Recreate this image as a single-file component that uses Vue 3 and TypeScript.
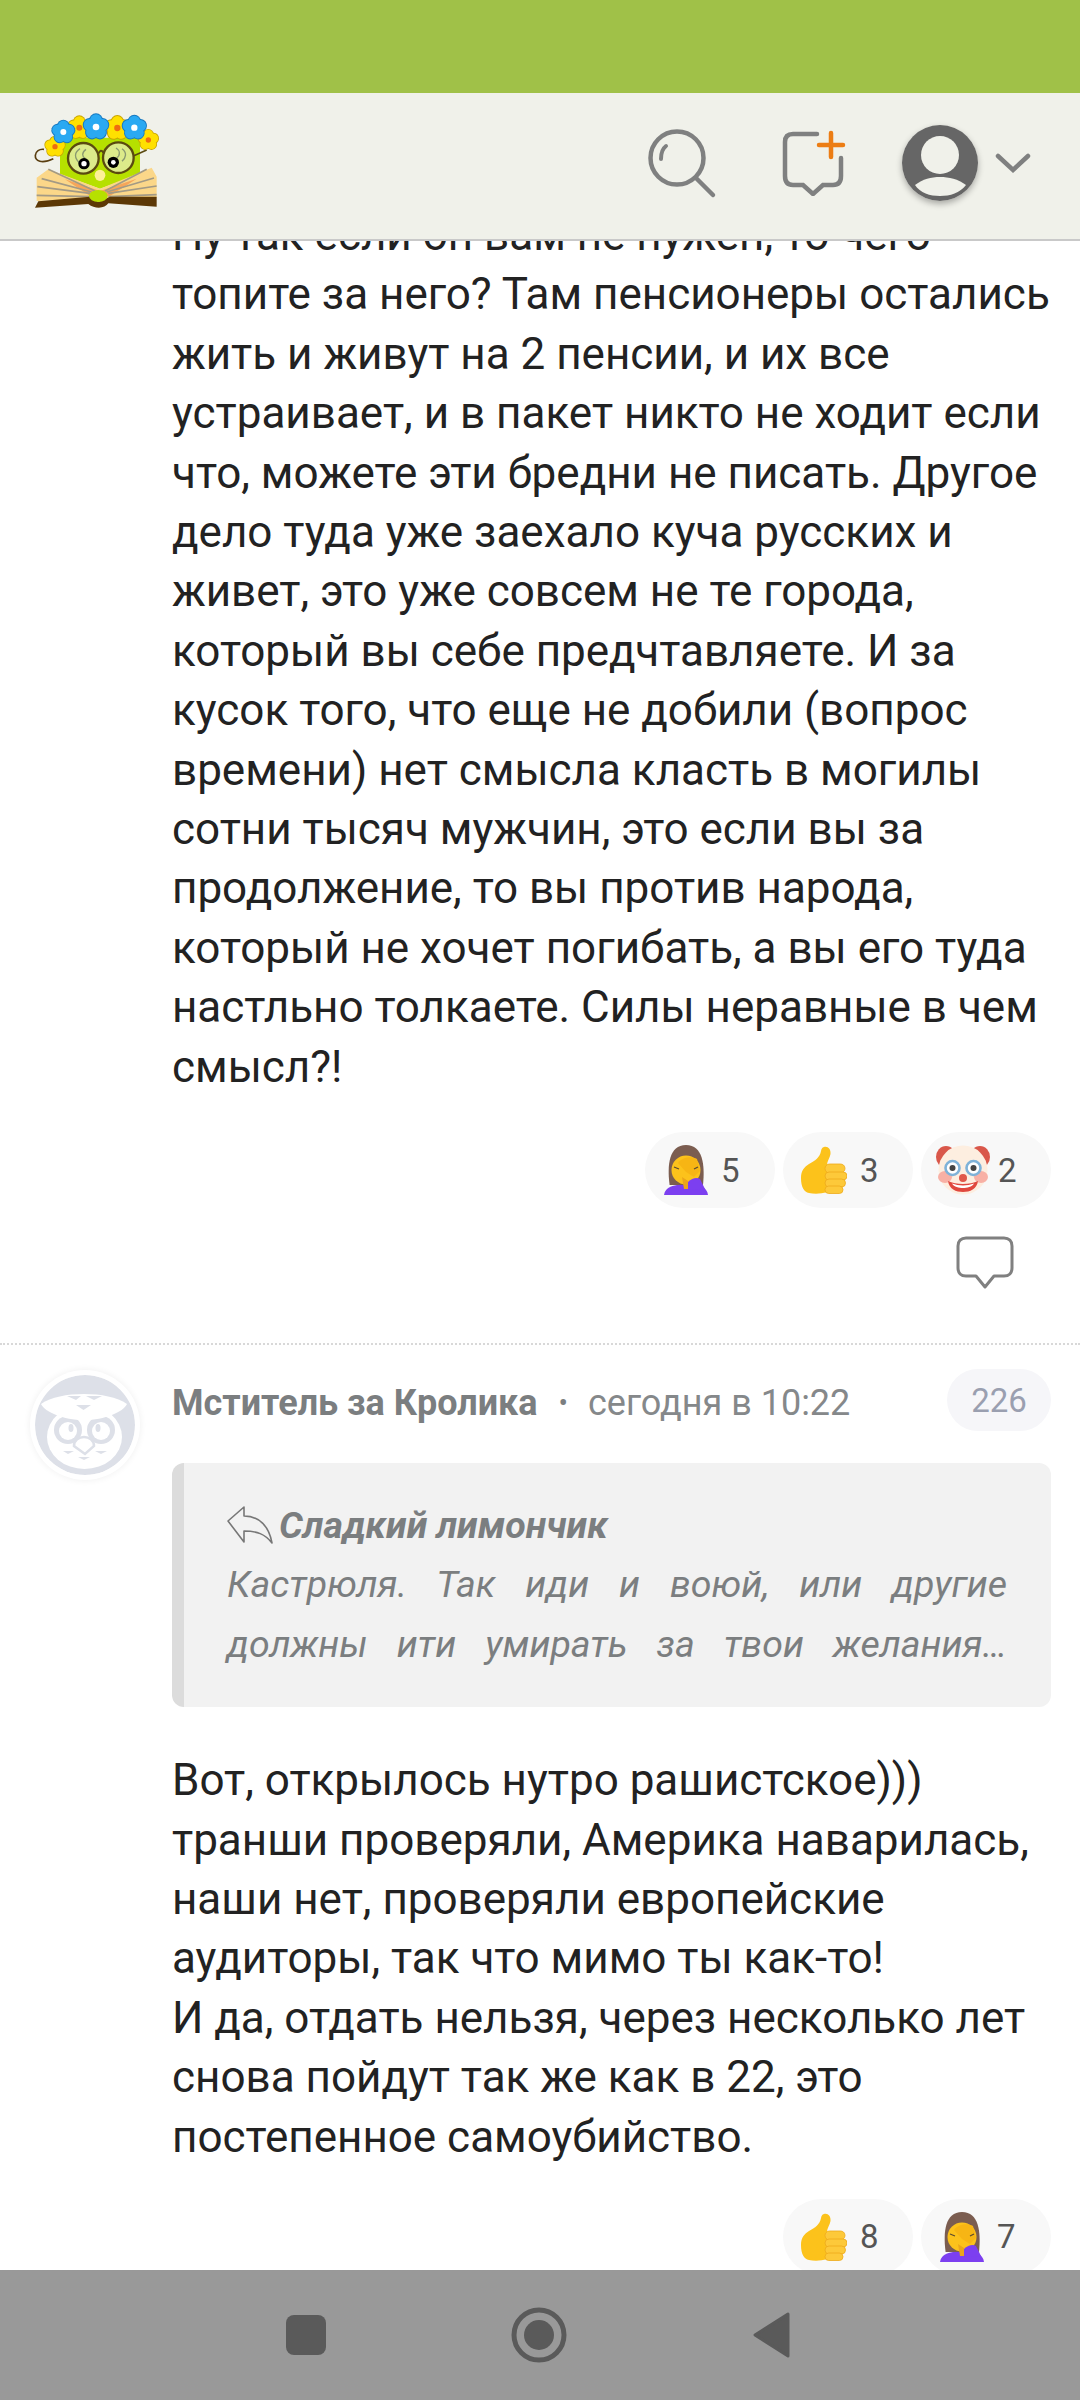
<script setup lang="ts">
interface Reaction { icon: string; count: number }
const firstText = 'Ну так если он вам не нужен, то чего топите за него? Там пенсионеры остались жить и живут на 2 пенсии, и их все устраивает, и в пакет никто не ходит если что, можете эти бредни не писать. Другое дело туда уже заехало куча русских и живет, это уже совсем не те города, который вы себе предчтавляете. И за кусок того, что еще не добили (вопрос времени) нет смысла класть в могилы сотни тысяч мужчин, это если вы за продолжение, то вы против народа, который не хочет погибать, а вы его туда настльно толкаете. Силы неравные в чем смысл?!'
const secondText = [
  'Вот, открылось нутро рашистское))) транши проверяли, Америка наварилась, наши нет, проверяли европейские аудиторы, так что мимо ты как-то!',
  'И да, отдать нельзя, через несколько лет снова пойдут так же как в 22, это постепенное самоубийство.'
]
const firstReactions: Reaction[] = [
  { icon: 'facepalm', count: 5 },
  { icon: 'thumb', count: 3 },
  { icon: 'clown', count: 2 }
]
const secondReactions: Reaction[] = [
  { icon: 'thumb', count: 8 },
  { icon: 'facepalm', count: 7 }
]
const petals = [0, 72, 144, 216, 288]
const flowers = [
  { x: 165, y: 172, s: 0.8, c: '#ffe000', e: '#c9a400', m: '#ef6c10' },
  { x: 445, y: 152, s: 0.8, c: '#ffe000', e: '#c9a400', m: '#ef6c10' },
  { x: 238, y: 115, s: 0.9, c: '#ffe000', e: '#c9a400', m: '#ef6c10' },
  { x: 352, y: 116, s: 0.95, c: '#ffe000', e: '#c9a400', m: '#ef6c10' },
  { x: 190, y: 128, s: 0.9, c: '#2aa9f2', e: '#1678c0', m: '#ffffff' },
  { x: 288, y: 113, s: 1, c: '#2aa9f2', e: '#1678c0', m: '#ffffff' },
  { x: 403, y: 115, s: 0.95, c: '#2aa9f2', e: '#1678c0', m: '#ffffff' }
]
</script>

<template>
  <div class="page">
    <svg class="defs" aria-hidden="true">
      <symbol id="facepalm" viewBox="0 0 44 50">
        <path d="M5.6 40 C3 20 5 0 22 0 C39 0 41 20 39 40 Z" fill="#7b5d50" />
        <path d="M0 50 C1 43 7 41 13 40 L31 40 C38 41 43 43 44 50 Z" fill="#7c3ff0" />
        <ellipse cx="22" cy="25" rx="14.5" ry="14.5" fill="#fcc21b" />
        <path d="M14 18 C18 12 28 11 33 14 L36 26 L30 32 L22 27 Z" fill="#f7b514" />
        <path d="M10 22 L15 24 M34 22 L30 24" stroke="#5b4a30" stroke-width="1.3" fill="none" />
        <path d="M24 37 C28 33 33 32 36 34 L41 44 L24 45 Z" fill="#7c3ff0" />
        <path d="M18 32 L24 36 L24 44 L20 44 Z" fill="#eba51a" />
      </symbol>
      <symbol id="thumb" viewBox="0 0 46 48">
        <path d="M23 1 C27 0 30 3 29.5 8 C29 12 26 15 26 19 L26 46 C20 48 13 48 8 47 C3 46 0 41 0 32 C0 25 3 21 8 18 C14 15 19 11 20 5 C20.5 3 21 1.5 23 1 Z" fill="#fcc21b" />
        <rect x="24" y="18" width="20" height="9" rx="4.5" fill="#fdc93a" stroke="#eda91a" stroke-width="0.8" />
        <rect x="24" y="26" width="22" height="8" rx="4" fill="#fdc93a" stroke="#eda91a" stroke-width="0.8" />
        <rect x="24" y="33" width="20.5" height="8" rx="4" fill="#fdc93a" stroke="#eda91a" stroke-width="0.8" />
        <rect x="24" y="40" width="18" height="7.5" rx="3.7" fill="#fdc93a" stroke="#eda91a" stroke-width="0.8" />
      </symbol>
      <symbol id="clown" viewBox="0 0 54 50">
        <ellipse cx="10" cy="12" rx="10" ry="11" fill="#d9574a" />
        <ellipse cx="44" cy="12" rx="10" ry="11" fill="#d9574a" />
        <circle cx="27" cy="25" r="24.5" fill="#fdeee0" />
        <ellipse cx="9" cy="32" rx="7" ry="6" fill="#f8b0a5" />
        <ellipse cx="45" cy="32" rx="7" ry="6" fill="#f8b0a5" />
        <circle cx="16.5" cy="23" r="7" fill="#fff" stroke="#7fb2d8" stroke-width="2.6" />
        <circle cx="37.5" cy="23" r="7" fill="#fff" stroke="#7fb2d8" stroke-width="2.6" />
        <circle cx="16.5" cy="23" r="3" fill="#444" />
        <circle cx="37.5" cy="23" r="3" fill="#444" />
        <path d="M12 36 C20 40 34 40 42 36 C41 44 34 47 27 47 C20 47 13 44 12 36 Z" fill="#e0483e" />
        <path d="M16 38.5 C23 41 31 41 38 38.5 C36 42 31 43 27 43 C23 43 18 42 16 38.5 Z" fill="#fff" />
        <circle cx="27" cy="33" r="4" fill="#e0584a" />
      </symbol>
    </svg>

    <div class="status-bar"></div>

    <header class="topbar">
      <svg class="logo" viewBox="90 50 420 330">
        <path d="M180 145 H420 V255 L300 298 L180 255 Z" fill="#b6e000" />
        <path d="M110 265 L145 240 L300 298 L455 235 L470 262 L470 325 L330 328 L270 328 L110 335 Z" fill="#fbd789" />
        <path d="M195 270 L300 305 L410 268 L330 320 H270 Z" fill="#f6a65a" />
        <path d="M112 292 L270 312 M110 318 L270 322 M145 240 L285 305 M125 268 L275 308 M470 290 L325 312 M470 316 L325 322 M440 240 L315 305 M462 266 L320 308" stroke="#a39a85" stroke-width="5" fill="none" />
        <path d="M105 355 L115 336 L270 322 L295 338 L330 322 L470 322 V352 L325 342 C315 358 285 360 265 344 Z" fill="#5c3806" />
        <ellipse cx="295" cy="320" rx="28" ry="18" fill="#b6e000" />
        <ellipse cx="300" cy="258" rx="16" ry="17" fill="#fdf09a" />
        <path d="M160 208 C125 225 105 215 106 198 C107 186 118 178 132 180" fill="none" stroke="#5a3e10" stroke-width="5" />
        <path d="M400 200 L440 182" fill="none" stroke="#5a4a10" stroke-width="5" />
        <circle cx="250" cy="207" r="46" fill="#dceb8a" stroke="#5a4a10" stroke-width="7" />
        <circle cx="355" cy="205" r="46" fill="#dceb8a" stroke="#5a4a10" stroke-width="7" />
        <path d="M296 192 Q302 178 310 190" fill="none" stroke="#5a4a10" stroke-width="6" />
        <path d="M240 178 C222 190 222 205 240 222 M258 180 C244 190 246 202 256 208 M348 176 C362 184 360 200 350 205 M366 178 C382 190 378 205 366 216" fill="none" stroke="#8a9a70" stroke-width="4" />
        <circle cx="252" cy="223" r="17" fill="#000" />
        <circle cx="252" cy="223" r="8" fill="#fff" />
        <circle cx="340" cy="219" r="17" fill="#000" />
        <circle cx="340" cy="219" r="7" fill="#fff" />
        <g v-for="(f, i) in flowers" :key="i" :transform="`translate(${f.x} ${f.y}) scale(${f.s})`">
          <circle v-for="a in petals" :key="a" :transform="`rotate(${a}) translate(0 -20)`" r="21" :fill="f.e" />
          <circle v-for="a in petals" :key="`p${a}`" :transform="`rotate(${a}) translate(0 -20)`" r="18" :fill="f.c" />
          <circle r="14" :fill="f.c" />
          <circle r="10" :fill="f.m" />
        </g>
      </svg>

      <div class="actions">
        <svg class="ic-search" viewBox="648 127 70 72">
          <circle cx="677" cy="158" r="26.5" fill="none" stroke="#7f8080" stroke-width="4.5" />
          <path d="M696 178 L713 195" stroke="#7f8080" stroke-width="4.5" stroke-linecap="round" />
          <path d="M661 159 C661 153 662 149 666 146" stroke="#7f8080" stroke-width="4" fill="none" stroke-linecap="round" />
        </svg>
        <svg class="ic-new" viewBox="780 130 66 66">
          <path d="M817 134 H793 C787 134 785 137 785 142 V176 C785 182 788 185 793 185 H803 L813 194 L823 185 H833 C838 185 841 182 841 176 V158" fill="none" stroke="#7f8080" stroke-width="4.5" stroke-linecap="round" />
          <path d="M831 133 V157 M819 145 H843" stroke="#ec7d14" stroke-width="4.5" stroke-linecap="round" />
        </svg>
        <div class="user">
          <svg viewBox="902 124 76 76">
            <circle cx="940" cy="162" r="38" fill="#666" />
            <circle cx="940" cy="154" r="19" fill="#f0f1ea" />
            <path d="M915 184 C923 178 931 176 940 176 C949 176 958 178 966 184 C960 192 950 195 940 195 C930 195 920 192 915 184 Z" fill="#f0f1ea" />
          </svg>
        </div>
        <svg class="ic-chevron" viewBox="995 151 36 22">
          <path d="M998 155 L1013 169 L1028 155" fill="none" stroke="#7f8080" stroke-width="4.5" stroke-linecap="round" />
        </svg>
      </div>
    </header>

    <main class="feed">
      <section class="comment first">
        <p class="body">{{ firstText }}</p>
        <div class="reactions">
          <div v-for="r in firstReactions" :key="r.icon" class="pill">
            <svg :class="['emoji', r.icon]"><use :href="`#${r.icon}`" /></svg>
            <span>{{ r.count }}</span>
          </div>
        </div>
        <div class="reply-row">
          <svg class="ic-comment" viewBox="0 0 58 53">
            <path d="M10 2 H48 C53 2 56 5 56 10 V32 C56 37 53 40 48 40 H38 L29 51 L20 40 H10 C5 40 2 37 2 32 V10 C2 5 5 2 10 2 Z" fill="none" stroke="#808080" stroke-width="3" stroke-linejoin="round" />
          </svg>
        </div>
      </section>

      <section class="comment second">
        <div class="avatar">
          <svg viewBox="0 0 100 100">
            <circle cx="50" cy="50" r="50" fill="#dde0e8" />
            <ellipse cx="49.5" cy="62" rx="37.5" ry="32" fill="#fff" />
            <circle cx="33" cy="55" r="14" fill="#dde0e8" />
            <circle cx="66" cy="55" r="14" fill="#dde0e8" />
            <circle cx="33" cy="56" r="9" fill="#fff" />
            <circle cx="66" cy="56" r="9" fill="#fff" />
            <ellipse cx="36" cy="53" rx="2.5" ry="4" fill="#dde0e8" />
            <ellipse cx="63" cy="53" rx="2.5" ry="4" fill="#dde0e8" />
            <path d="M6 29 C16 22 32 19 49 19 C66 19 82 22 92 29 C88 37 70 45 49 45 C28 45 10 37 6 29 Z" fill="#fff" />
            <path d="M32 21 L41 25 L46 21 Z M51 21 L59 25 L67 21 Z M41 30 L48.5 35 L56 30 Z" fill="#dde0e8" />
            <path d="M39 71 C39 65 44 62 49 62 C54 62 59 65 59 71 L50 79 Z" fill="#fff" stroke="#dde0e8" stroke-width="2.5" />
            <path d="M28 76 L33 79 L39 76 Z M60 76 L66 79 L72 76 Z M43 82 L49 85 L55 82 Z" fill="#dde0e8" />
          </svg>
        </div>
        <div class="main">
          <div class="meta">
            <span class="name">Мститель за Кролика</span>
            <span class="dot">•</span>
            <span class="time">сегодня в 10:22</span>
            <span class="score">226</span>
          </div>
          <blockquote class="quote">
            <div class="quote-title">
              <svg viewBox="0 0 46 38">
                <path d="M1 15 L17 1 V10 C32 10 42 20 45 37 C38 28 30 25 17 25 V36 Z" fill="none" stroke="#777" stroke-width="1.6" stroke-linejoin="round" />
              </svg>
              <b>Сладкий лимончик</b>
            </div>
            <p>Кастрюля. Так иди и воюй, или другие должны ити умирать за твои желания…</p>
          </blockquote>
          <p v-for="(t, i) in secondText" :key="i" class="body">{{ t }}</p>
          <div class="reactions second-reactions">
            <div v-for="r in secondReactions" :key="r.icon" class="pill">
              <svg :class="['emoji', r.icon]"><use :href="`#${r.icon}`" /></svg>
              <span>{{ r.count }}</span>
            </div>
          </div>
        </div>
      </section>
    </main>

    <nav class="navbar">
      <div class="nav-square"></div>
      <svg class="nav-home" viewBox="0 0 56 56">
        <circle cx="28" cy="28" r="25" fill="none" stroke="#5a5a5a" stroke-width="5" />
        <circle cx="28" cy="28" r="15" fill="#5a5a5a" />
      </svg>
      <svg class="nav-back" viewBox="0 0 38 46">
        <path d="M35 2 V44 L2 23 Z" fill="#5a5a5a" stroke="#5a5a5a" stroke-width="3" stroke-linejoin="round" />
      </svg>
    </nav>
  </div>
</template>

<style>
html, body { margin: 0; background: #fff; }
</style>

<style scoped>
.page {
  width: 1080px;
  height: 2400px;
  display: flex;
  flex-direction: column;
  overflow: hidden;
  font-family: Roboto, "Noto Sans", sans-serif;
  background: #fff;
}
.defs { display: block; width: 0; height: 0; }
.status-bar { height: 93px; background: #a0c148; flex: none; }
.topbar {
  height: 148px;
  flex: none;
  box-sizing: border-box;
  display: flex;
  justify-content: space-between;
  align-items: center;
  background: #f0f1ea;
  border-bottom: 2px solid #c9c9c9;
  padding: 0 49px 0 30px;
}
.logo { width: 140px; height: 110px; margin-top: -10px; }
.actions { display: flex; align-items: center; margin-top: -6px; }
.ic-search { width: 70px; height: 72px; margin-right: 62px; }
.ic-new { width: 66px; height: 66px; margin-right: 56px; }
.user { width: 76px; height: 76px; border-radius: 50%; box-shadow: 0 3px 6px rgba(0, 0, 0, 0.3); margin-right: 17px; }
.user svg { display: block; width: 76px; height: 76px; }
.ic-chevron { width: 36px; height: 22px; }
.feed { flex: 1; min-height: 0; overflow: hidden; }
.comment.first { padding: 0 29px 0 172px; border-bottom: 2px dotted #d8d8d8; }
.first > .body { margin-top: -35px; }
.body {
  margin: 0;
  font-size: 44px;
  line-height: 59.4px;
  color: #222;
}
.reactions { display: flex; justify-content: flex-end; gap: 8px; margin-top: 35px; }
.pill {
  box-sizing: border-box;
  width: 130px;
  height: 76px;
  border-radius: 38px;
  background: #f8f8f8;
  display: flex;
  align-items: center;
  gap: 12px;
  padding-left: 18px;
  font-size: 33px;
  color: #555;
}
.pill:has(.thumb) { gap: 13px; }
.pill:has(.clown) { gap: 8px; padding-left: 15px; }
.emoji { width: 46px; height: 50px; flex: none; }
.emoji.clown { width: 54px; }
.reply-row { display: flex; justify-content: flex-end; padding: 28px 37px 54px 0; }
.ic-comment { width: 58px; height: 53px; display: block; }
.comment.second {
  display: grid;
  grid-template-columns: 172px 879px;
  padding-top: 24px;
}
.avatar {
  width: 100px;
  height: 100px;
  margin: 6px 0 0 35px;
  border-radius: 50%;
  box-shadow: 0 0 0 5px #fff, 0 0 6px 6px rgba(0, 0, 0, 0.05);
}
.avatar svg { display: block; width: 100%; height: 100%; border-radius: 50%; }
.meta { display: flex; align-items: center; height: 62px; font-size: 36px; color: #7b7e80; }
.name, .dot, .time { margin-top: 5px; }
.name { font-weight: 700; }
.dot { margin-left: 21px; margin-right: 20px; font-size: 28px; }
.time { color: #85888a; }
.score {
  margin-left: auto;
  width: 104px;
  height: 62px;
  border-radius: 31px;
  background: #f6f6f9;
  color: #9a9fb0;
  font-size: 33px;
  display: flex;
  align-items: center;
  justify-content: center;
}
.quote {
  margin: 32px 0 44px;
  box-sizing: border-box;
  height: 244px;
  background: #f2f2f2;
  border-left: 12px solid #dcdcdc;
  border-radius: 12px;
  padding: 33px 44px 0 43px;
  color: #7b7e80;
  font-size: 37.5px;
  font-style: italic;
}
.quote-title { display: flex; align-items: center; gap: 6px; height: 58px; }
.quote-title svg { width: 46px; height: 38px; flex: none; }
.quote-title b { font-weight: 700; }
.quote p {
  margin: 0;
  line-height: 60px;
  text-align: justify;
  text-align-last: justify;
}
.second-reactions { margin-top: 32px; }
.navbar {
  height: 130px;
  flex: none;
  background: #999;
  display: flex;
  align-items: center;
  padding-left: 286px;
}
.nav-square { width: 40px; height: 40px; border-radius: 8px; background: #5a5a5a; margin-right: 185px; }
.nav-home { width: 56px; height: 56px; margin-right: 186px; }
.nav-back { width: 38px; height: 46px; }
</style>
